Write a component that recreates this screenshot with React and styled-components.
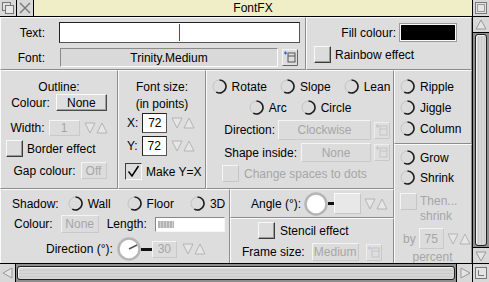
import styled, { createGlobalStyle, css } from "styled-components";

const GlobalStyle = createGlobalStyle`
  * { box-sizing: border-box; }
  html, body { margin: 0; padding: 0; background: #dddddd; }
  body {
    font-family: "Liberation Sans", Arial, sans-serif;
    font-size: 12px;
    color: #000;
  }
`;

const Window = styled.div`
  width: 489px;
  height: 282px;
  display: flex;
  flex-direction: column;
  background: #dddddd;
  overflow: hidden;
`;

const TitleBar = styled.div`
  display: flex;
  height: 17px;
  flex: none;
  border-bottom: 1px solid #000;
`;

const ToolIcon = styled.div`
  width: ${(p) => p.$w || 17}px;
  flex: none;
  display: flex;
  align-items: center;
  justify-content: center;
  background: #d8d8d8;
  ${(p) =>
    p.$right
      ? css`border-left: 1px solid #000;`
      : css`border-right: 1px solid #000;`}
`;

const Title = styled.div`
  flex: 1;
  display: flex;
  align-items: center;
  justify-content: center;
  background: #efeec6;
  line-height: 1;
`;

const Main = styled.div`
  flex: 1;
  display: flex;
  min-height: 0;
`;

const Content = styled.div`
  flex: 1;
  display: flex;
  flex-direction: column;
`;

const Strip = styled.div`
  display: flex;
  flex-direction: ${(p) => (p.$col ? "column" : "row")};
  ${(p) => (p.$h ? `height: ${p.$h}px; flex: none;` : "")}
  ${(p) => (p.$w ? `width: ${p.$w}px; flex: none;` : "")}
  ${(p) => (!p.$h && !p.$w ? "flex: 1;" : "")}
`;

const Panel = styled.div`
  border: 1px solid;
  border-color: #fafafa #8c8c8c #8c8c8c #fafafa;
  display: flex;
  flex-direction: column;
  ${(p) => (p.$w ? `width: ${p.$w}px; flex: none;` : "")}
  ${(p) => (p.$h ? `height: ${p.$h}px; flex: none;` : "")}
  ${(p) => (!p.$h && !p.$w ? "flex: 1;" : "")}
  padding: ${(p) => p.$pad || "0"};
  gap: ${(p) => p.$gap || 0}px;
`;

const Row = styled.div`
  display: flex;
  align-items: ${(p) => p.$align || "center"};
  gap: ${(p) => p.$gap ?? 4}px;
  margin-top: ${(p) => p.$mt || 0}px;
  justify-content: ${(p) => p.$justify || "flex-start"};
  padding-left: ${(p) => p.$pl || 0}px;
  padding-right: ${(p) => p.$pr || 0}px;
  ${(p) => (p.$fill ? "flex: 1;" : "")}
`;

const Label = styled.span`
  white-space: nowrap;
  line-height: 14px;
  color: ${(p) => (p.$disabled ? "#a6a6a6" : "#000")};
  text-align: ${(p) => p.$align || "left"};
`;

const Heading = styled.div`
  text-align: center;
  line-height: 14px;
  margin-top: ${(p) => p.$mt || 0}px;
`;

const fieldVariants = {
  white: css`
    background: #fff;
    border: 1px solid;
    border-color: #222 #555 #555 #222;
  `,
  sunken: css`
    background: #d9d9d9;
    border: 1px solid;
    border-color: #8a8a8a #fbfbfb #fbfbfb #8a8a8a;
  `,
  button: css`
    background: #dedede;
    border: 1px solid;
    border-color: #fbfbfb #4a4a4a #4a4a4a #fbfbfb;
    box-shadow: inset -1px -1px 0 #a0a0a0;
  `,
  disabled: css`
    background: #dcdcdc;
    border: 1px solid;
    border-color: #f4f4f4 #c9c9c9 #c9c9c9 #f4f4f4;
    color: #a6a6a6;
  `,
  light: css`
    background: #e8e8e8;
    border: 1px solid;
    border-color: #fafafa #c6c6c6 #c6c6c6 #fafafa;
  `,
  swatch: css`
    background: #000;
    border: 1px solid #fafafa;
    box-shadow: 0 0 0 1px #9a9a9a;
  `,
};

const Field = styled.div`
  width: ${(p) => p.$w}px;
  height: ${(p) => p.$h}px;
  flex: none;
  display: flex;
  align-items: center;
  justify-content: center;
  white-space: nowrap;
  line-height: 1;
  ${(p) => fieldVariants[p.$variant || "white"]}
`;

const Caret = styled.span`
  width: 1px;
  height: 17px;
  background: #c42020;
`;

const Box = styled.span`
  width: 17px;
  height: 17px;
  flex: none;
  display: flex;
  align-items: center;
  justify-content: center;
  background: #dcdcdc;
  border: 1px solid;
  ${(p) =>
    p.$disabled
      ? css`border-color: #f4f4f4 #c6c6c6 #c6c6c6 #f4f4f4;`
      : p.$checked
      ? css`border-color: #3c3c3c #f8f8f8 #f8f8f8 #3c3c3c;`
      : css`
          border-color: #f8f8f8 #3c3c3c #3c3c3c #f8f8f8;
          box-shadow: inset -1px -1px 0 #9a9a9a;
        `}
`;

const Connector = styled.span`
  width: ${(p) => p.$w}px;
  height: 3px;
  flex: none;
  background: #111;
`;

const Slider = styled.div`
  width: 70px;
  height: 15px;
  flex: none;
  display: flex;
  padding: 3px 2px;
  background: #fff;
  border: 1px solid;
  border-color: #888 #f6f6f6 #f6f6f6 #888;
`;

const SliderKnob = styled.span`
  width: 16px;
  background: repeating-linear-gradient(90deg, #b4b4b4 0 2px, #d0d0d0 2px 3px);
`;

const Percent = styled.div`
  text-align: center;
  color: #a6a6a6;
  line-height: 14px;
  margin-top: 1px;
  padding-right: 6px;
`;

const Stack = styled.div`
  display: flex;
  flex-direction: column;
  gap: ${(p) => p.$gap || 0}px;
`;

const VScroll = styled.div`
  width: 17px;
  flex: none;
  border-left: 1px solid #000;
  display: flex;
  flex-direction: column;
`;

const HScroll = styled.div`
  height: 19px;
  flex: none;
  border-top: 1px solid #000;
  display: flex;
`;

const ScrollButton = styled.div`
  flex: none;
  display: flex;
  align-items: center;
  justify-content: center;
  background: #d8d8d8;
  ${(p) => (p.$vertical ? "height: 16px;" : "width: 16px;")}
  ${(p) => p.$edge && `border-${p.$edge}: 1px solid #000;`}
`;

const Track = styled.div`
  flex: 1;
  display: flex;
  background: #8e8e8e;
  padding: ${(p) => (p.$vertical ? "1px 2px" : "2px 1px")};
`;

const Thumb = styled.div`
  flex: 1;
  background: repeating-linear-gradient(
    ${(p) => (p.$vertical ? "90deg" : "0deg")},
    #d6d6d6 0 2px,
    #cacaca 2px 3px
  );
  border: 1px solid #222;
  border-radius: 3px;
  box-shadow: inset 1px 1px 0 #f4f4f4;
`;

function Radio() {
  return (
    <svg width="15" height="15" viewBox="0 0 15 15" style={{ flex: "none" }}>
      <circle cx="7.5" cy="7.5" r="6.5" fill="#dcdcdc" stroke="#c4c4c4" />
      <path d="M7.5 1 A6.5 6.5 0 1 1 4.25 13.13" fill="none" stroke="#1e1e1e" strokeWidth="1.6" />
    </svg>
  );
}

function RadioItem({ children }) {
  return (
    <Row $gap={5}>
      <Radio />
      <Label>{children}</Label>
    </Row>
  );
}

function Tick() {
  return (
    <svg width="13" height="13" viewBox="0 0 13 13">
      <path d="M1.5 6.5 L5 11 L11.5 1" fill="none" stroke="#000" strokeWidth="1.5" />
    </svg>
  );
}

function Arrows({ w = 24 }) {
  return (
    <svg width={w} height="16" viewBox="0 0 24 16" style={{ flex: "none" }}>
      <path d="M1 3 H11 L6 13 Z" fill="#e6e6e6" stroke="#b4b4b4" />
      <path d="M13 13 H23 L18 3 Z" fill="#e6e6e6" stroke="#b4b4b4" />
    </svg>
  );
}

function MenuIcon({ disabled }) {
  const line = disabled ? "#c4c4c4" : "#555";
  const mark = disabled ? "#b8c4d4" : "#2a5bd7";
  return (
    <svg width="16" height="17" viewBox="0 0 16 17" style={{ flex: "none" }}>
      <rect x="0.5" y="0.5" width="15" height="16" fill="#dedede" stroke={disabled ? "#eeeeee" : "#f4f4f4"} />
      <path d="M15.5 0.5 V16.5 H0.5" fill="none" stroke={disabled ? "#c8c8c8" : "#666"} />
      <rect x="6" y="4" width="7" height="9" fill="none" stroke={line} />
      <path d="M6 7 H13" stroke={line} />
      <path d="M2 4 H5 M3.5 2.5 V5.5" stroke={mark} strokeWidth="1.2" />
    </svg>
  );
}

function Dial({ pointer }) {
  return (
    <svg width="24" height="24" viewBox="0 0 24 24" style={{ flex: "none" }}>
      <circle cx="12" cy="12" r="10.5" fill="#fff" stroke="#b6b6b6" strokeWidth="2.5" />
      {pointer && <path d="M12 12 L20 8" stroke="#555" strokeWidth="1.5" />}
    </svg>
  );
}

function Triangle({ dir }) {
  const paths = {
    up: "M2 11 H12 L7 2 Z",
    down: "M2 3 H12 L7 12 Z",
    left: "M11 2 V12 L2 7 Z",
    right: "M3 2 V12 L12 7 Z",
  };
  return (
    <svg width="14" height="14" viewBox="0 0 14 14">
      <path d={paths[dir]} fill="#e4e4e4" stroke="#9a9a9a" />
    </svg>
  );
}

function BackIcon() {
  return (
    <svg width="14" height="14" viewBox="0 0 14 14">
      <rect x="1.5" y="1.5" width="8" height="8" fill="#e0e0e0" stroke="#777" />
      <rect x="4.5" y="4.5" width="8" height="8" fill="#e8e8e8" stroke="#777" />
    </svg>
  );
}

function CloseIcon() {
  return (
    <svg width="14" height="14" viewBox="0 0 14 14">
      <path d="M2 2 L12 12 M12 2 L2 12" stroke="#777" strokeWidth="1.4" />
    </svg>
  );
}

function ToggleIcon() {
  return (
    <svg width="14" height="14" viewBox="0 0 14 14">
      <rect x="1.5" y="1.5" width="11" height="11" fill="#e4e4e4" stroke="#777" />
      <rect x="3.5" y="3.5" width="7" height="7" fill="none" stroke="#999" />
    </svg>
  );
}

function ResizeIcon() {
  return (
    <svg width="14" height="14" viewBox="0 0 14 14">
      <rect x="1.5" y="1.5" width="11" height="11" fill="#e4e4e4" stroke="#777" />
      <path d="M4.5 4 V9.5 H10" fill="none" stroke="#777" />
    </svg>
  );
}

export default function App() {
  return (
    <>
      <GlobalStyle />
      <Window>
        <TitleBar>
          <ToolIcon><BackIcon /></ToolIcon>
          <ToolIcon><CloseIcon /></ToolIcon>
          <Title>FontFX</Title>
          <ToolIcon $right><ToggleIcon /></ToolIcon>
        </TitleBar>

        <Main>
          <Content>
            <Strip $h={53}>
              <Panel $w={306} $pad="4px 0 0 0" $gap={5}>
                <Row $gap={14}>
                  <Label style={{ width: 44, textAlign: "right" }}>Text:</Label>
                  <Field $w={241} $h={21} $variant="white"><Caret /></Field>
                </Row>
                <Row $gap={4}>
                  <Label style={{ width: 44, textAlign: "right", marginRight: 11 }}>Font:</Label>
                  <Field $w={218} $h={19} $variant="sunken">Trinity.Medium</Field>
                  <MenuIcon />
                </Row>
              </Panel>
              <Panel $pad="6px 0 0 7px">
                <Row $justify="flex-end" $pr={15} $gap={4}>
                  <Label>Fill colour:</Label>
                  <Field $w={56} $h={17} $variant="swatch" />
                </Row>
                <Row $mt={5} $gap={4}>
                  <Box />
                  <Label>Rainbow effect</Label>
                </Row>
              </Panel>
            </Strip>

            <Strip>
              <Strip $col $w={394}>
                <Strip $h={119}>
                  <Panel $w={118} $pad="9px 0 0 0">
                    <Heading>Outline:</Heading>
                    <Row $justify="center" $gap={6}>
                      <Label>Colour:</Label>
                      <Field $w={51} $h={17} $variant="button">None</Field>
                    </Row>
                    <Row $justify="center" $mt={9} $gap={4}>
                      <Label>Width:</Label>
                      <Field $w={31} $h={16} $variant="disabled">1</Field>
                      <Arrows />
                    </Row>
                    <Row $mt={4} $pl={5} $gap={4}>
                      <Box />
                      <Label>Border effect</Label>
                    </Row>
                    <Row $justify="center" $mt={5} $gap={5} $pl={2}>
                      <Label>Gap colour:</Label>
                      <Field $w={26} $h={17} $variant="disabled">Off</Field>
                    </Row>
                  </Panel>

                  <Panel $w={88} $pad="9px 0 0 0">
                    <Heading>Font size:</Heading>
                    <Heading $mt={3}>(in points)</Heading>
                    <Row $mt={2} $pl={8} $gap={4}>
                      <Label>X:</Label>
                      <Field $w={25} $h={20} $variant="white">72</Field>
                      <Arrows />
                    </Row>
                    <Row $mt={3} $pl={8} $gap={4}>
                      <Label>Y:</Label>
                      <Field $w={25} $h={20} $variant="white">72</Field>
                      <Arrows />
                    </Row>
                    <Row $mt={7} $pl={6} $gap={4}>
                      <Box $checked><Tick /></Box>
                      <Label>Make Y=X</Label>
                    </Row>
                  </Panel>

                  <Panel $pad="8px 0 0 0">
                    <Row $justify="center" $gap={13} $pl={2}>
                      <RadioItem>Rotate</RadioItem>
                      <RadioItem>Slope</RadioItem>
                      <RadioItem>Lean</RadioItem>
                    </Row>
                    <Row $justify="center" $gap={14} $mt={6}>
                      <RadioItem>Arc</RadioItem>
                      <RadioItem>Circle</RadioItem>
                    </Row>
                    <Row $justify="flex-end" $pr={3} $mt={5} $gap={3}>
                      <Label>Direction:</Label>
                      <Field $w={93} $h={20} $variant="disabled">Clockwise</Field>
                      <MenuIcon disabled />
                    </Row>
                    <Row $justify="flex-end" $pr={3} $mt={3} $gap={3}>
                      <Label style={{ marginRight: 1 }}>Shape inside:</Label>
                      <Field $w={70} $h={19} $variant="disabled">None</Field>
                      <MenuIcon disabled />
                    </Row>
                    <Row $mt={3} $pl={15} $gap={5}>
                      <Box $disabled />
                      <Label $disabled>Change spaces to dots</Label>
                    </Row>
                  </Panel>
                </Strip>

                <Strip>
                  <Panel $w={230} $pad="6px 0 0 0">
                    <Row $pl={11} $gap={9}>
                      <Label>Shadow:</Label>
                      <Row $gap={16}>
                        <RadioItem>Wall</RadioItem>
                        <RadioItem>Floor</RadioItem>
                        <RadioItem>3D</RadioItem>
                      </Row>
                    </Row>
                    <Row $mt={4} $pl={13} $gap={8}>
                      <Label>Colour:</Label>
                      <Field $w={38} $h={18} $variant="disabled">None</Field>
                      <Label>Length:</Label>
                      <Slider><SliderKnob /></Slider>
                    </Row>
                    <Row $mt={4} $pl={45} $gap={0}>
                      <Label style={{ marginRight: 4 }}>Direction (°):</Label>
                      <Dial pointer />
                      <Connector $w={11} />
                      <Field $w={25} $h={17} $variant="disabled">30</Field>
                      <span style={{ width: 5 }} />
                      <Arrows />
                    </Row>
                  </Panel>

                  <Strip $col>
                    <Panel $h={29}>
                      <Row $fill $pl={20} $gap={0}>
                        <Label style={{ marginRight: 3 }}>Angle (°):</Label>
                        <Dial />
                        <Connector $w={6} />
                        <Field $w={27} $h={21} $variant="light" />
                        <span style={{ width: 3 }} />
                        <Arrows />
                      </Row>
                    </Panel>
                    <Panel $pad="3px 0 0 0">
                      <Row $pl={27} $gap={5}>
                        <Box />
                        <Label>Stencil effect</Label>
                      </Row>
                      <Row $mt={4} $pl={11} $gap={7}>
                        <Label>Frame size:</Label>
                        <Field $w={47} $h={18} $variant="disabled">Medium</Field>
                        <MenuIcon disabled />
                      </Row>
                    </Panel>
                  </Strip>
                </Strip>
              </Strip>

              <Strip $col>
                <Panel $h={74} $pad="8px 0 0 5px" $gap={6}>
                  <RadioItem>Ripple</RadioItem>
                  <RadioItem>Jiggle</RadioItem>
                  <RadioItem>Column</RadioItem>
                </Panel>
                <Panel $pad="5px 0 0 5px">
                  <Stack $gap={5}>
                    <RadioItem>Grow</RadioItem>
                    <RadioItem>Shrink</RadioItem>
                  </Stack>
                  <Row $mt={8} $align="flex-start" $gap={3}>
                    <Box $disabled />
                    <Stack>
                      <Label $disabled style={{ lineHeight: "15px", marginTop: 1 }}>Then...</Label>
                      <Label $disabled style={{ lineHeight: "15px" }}>shrink</Label>
                    </Stack>
                  </Row>
                  <Row $mt={4} $pl={3} $gap={3}>
                    <Label $disabled>by</Label>
                    <Field $w={25} $h={21} $variant="disabled">75</Field>
                    <Arrows />
                  </Row>
                  <Percent>percent</Percent>
                </Panel>
              </Strip>
            </Strip>
          </Content>

          <VScroll>
            <ScrollButton $vertical $edge="bottom"><Triangle dir="up" /></ScrollButton>
            <Track $vertical><Thumb $vertical /></Track>
            <ScrollButton $vertical $edge="top"><Triangle dir="down" /></ScrollButton>
          </VScroll>
        </Main>

        <HScroll>
          <ScrollButton $edge="right"><Triangle dir="left" /></ScrollButton>
          <Track><Thumb /></Track>
          <ScrollButton $edge="left"><Triangle dir="right" /></ScrollButton>
          <ToolIcon $right><ResizeIcon /></ToolIcon>
        </HScroll>
      </Window>
    </>
  );
}
